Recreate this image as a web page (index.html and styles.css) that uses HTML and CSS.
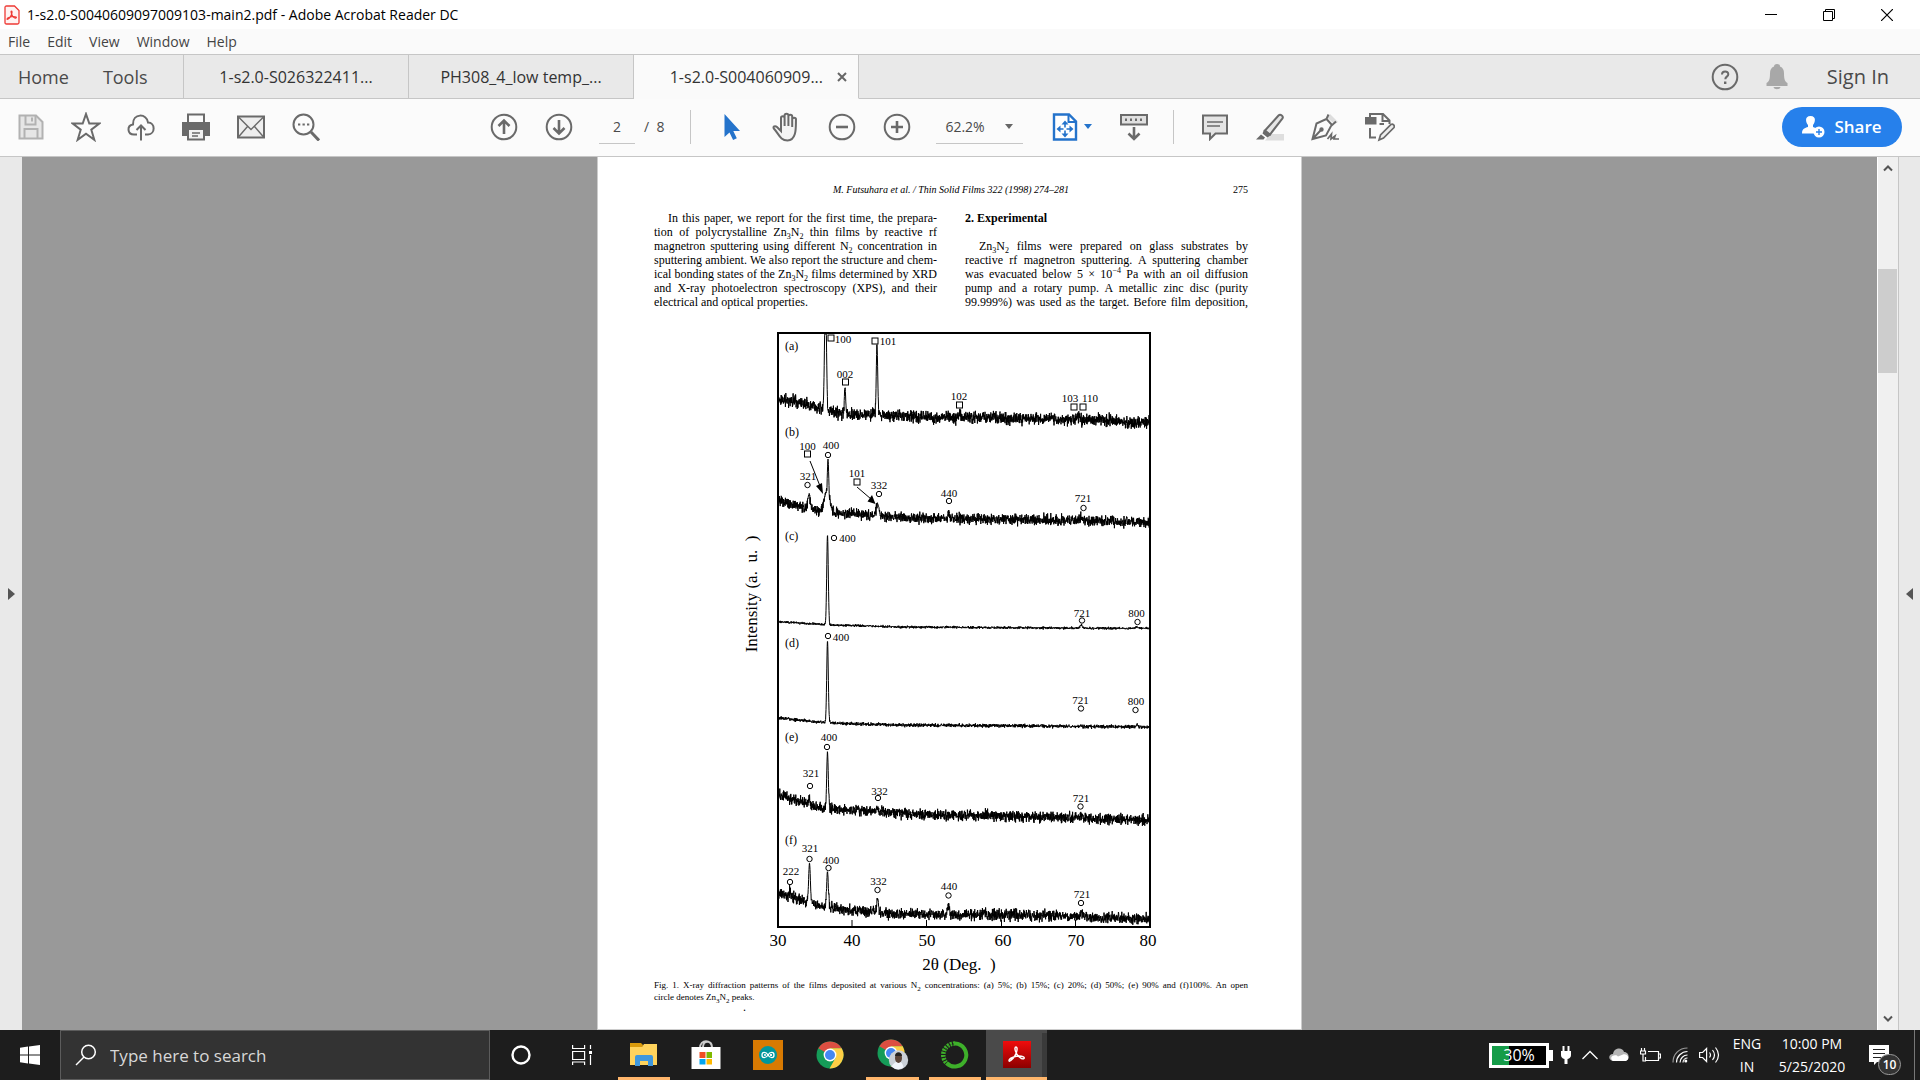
FILE: index.html
```html
<!DOCTYPE html>
<html lang="en">
<head>
<meta charset="utf-8">
<title>1-s2.0-S0040609097009103-main2.pdf - Adobe Acrobat Reader DC</title>
<link rel="stylesheet" href="styles.css">
</head>
<body>
<div class="app">
  <header class="titlebar">
    <svg class="file-icon" width="16" height="20" viewBox="0 0 16 20" fill="none" stroke="#ee3a35"><path d="M2.5 1h8L15 5.500V17.500Q15 19 13.500 19h-11Q1 19 1 17.500v-15Q1 1 2.500 1z" fill="#fff3f2" stroke-width="1.300"/><path d="M7.500 6c1 0 .5 3-1 5.500s-3.500 3.500-3.500 2.500 4-2.500 6.500-2.500 3.500 1 2.500 1.500-3-.5-4-3S6.800 6 7.500 6z" stroke-width="1.200"/></svg>
    <span class="title">1-s2.0-S0040609097009103-main2.pdf - Adobe Acrobat Reader DC</span>
    <div class="window-buttons">
      <button aria-label="Minimize"><svg width="12" height="12" viewBox="0 0 12 12"><path d="M0 5.500h12" stroke="#000"/></svg></button>
      <button aria-label="Restore"><svg width="12" height="12" viewBox="0 0 12 12" fill="none" stroke="#000"><path d="M.5 2.500h9v9h-9zM2.500 2V.5h9v9H10"/></svg></button>
      <button aria-label="Close"><svg width="12" height="12" viewBox="0 0 12 12"><path d="M0 0l12 12M12 0L0 12" stroke="#000" stroke-width="1.200"/></svg></button>
    </div>
  </header>
  <nav class="menubar" aria-label="Menu">
    <button>File</button><button>Edit</button><button>View</button><button>Window</button><button>Help</button>
  </nav>
  <nav class="tabs" aria-label="Documents">
    <div class="tabs-main"><button>Home</button><button>Tools</button></div>
    <button class="tab">1-s2.0-S026322411...</button>
    <button class="tab">PH308_4_low temp_...</button>
    <div class="tab tab-active"><button class="tab-name">1-s2.0-S004060909...</button><button class="tab-close" aria-label="Close tab"><svg width="10" height="10" viewBox="0 0 10 10"><path d="M1 1l8 8M9 1L1 9" stroke="#666" stroke-width="2"/></svg></button></div>
    <div class="account">
      <button aria-label="Help"><svg width="28" height="28" viewBox="0 0 28 28" fill="none" stroke="#6a6a6a"><circle cx="14" cy="14" r="12.300" stroke-width="2"/><path d="M11 11.500c0-4 6.300-4 6.300-.3 0 2.500-3 2.400-3 5" stroke-width="2"/><path d="M14.200 18.500v2.500" stroke-width="2.400"/></svg></button>
      <button aria-label="Notifications"><svg width="22" height="26" viewBox="0 0 22 26" fill="#a8a8a8"><path d="M11 0c2 0 3 1 3 2.500 3 1.200 4 3.500 4 7 0 6 1 8 3.500 9.500V22H.5v-3C3 17.500 4 15.500 4 9.500c0-3.500 1-5.800 4-7C8 1 9 0 11 0zM7.500 23h7c-.5 3-6.500 3-7 0z"/></svg></button>
      <button class="sign-in">Sign In</button>
    </div>
  </nav>
  <div class="toolbar">
    <div class="tools">
      <button aria-label="Save"><svg class="pale" viewBox="0 0 28 28"><path d="M2.500 2.500H19l6.500 6.500v16.500h-23z" fill="#e6e6e6"/><path d="M8.500 3v8.500h10V3M15 4.500v4M7.500 25v-9h13v9"/></svg></button>
      <button aria-label="Star"><svg class="wide" viewBox="0 0 30 30"><path d="M15 2l3.300 9.600h10l-8 6.100 3 10.100L15 21.700l-8.300 6.100 3-10.100-8-6.100h10z"/></svg></button>
      <button aria-label="Upload to cloud"><svg viewBox="0 0 28 28"><path d="M10 21.500H7C.2 21.500-.5 12.500 6 11.500 5.500 0 20 0 21 9.500c7.500.2 7.500 11.500 0 12h-3M14 27.500V13M9.500 17L14 12.500l4.500 4.500"/></svg></button>
      <button aria-label="Print"><svg viewBox="0 0 28 28"><path d="M6 9V1.500h16V9"/><path d="M1 10h26v12h-5v-6H6v6H1z" fill="#6a6a6a"/><path d="M6 16h16v10.500H6z" fill="#f2f2f2"/><path d="M10 20h8M10 23h6" stroke-width="1.500"/></svg></button>
      <button aria-label="Email"><svg viewBox="0 0 28 28"><path d="M1 3.500h26v21H1z" fill="#eee"/><path d="M1 3.500l13 13 13-13M1 24.500l9.500-11M27 24.500l-9.500-11" stroke-width="1.400"/></svg></button>
      <button aria-label="Find"><svg viewBox="0 0 28 28"><circle cx="11.500" cy="11.500" r="10"/><path d="M19 19l8 8.500" stroke-width="3"/><path d="M6 11.500h2.300M10.500 11.500h2.300M15 11.500h2.300" stroke-width="2"/></svg></button>
    </div>
    <div class="tools paging">
      <button aria-label="Previous page"><svg viewBox="0 0 28 28"><circle cx="14" cy="14" r="12.300"/><path d="M14 21V8M8.500 13L14 7.500l5.500 5.500" stroke-width="2.600"/></svg></button>
      <button aria-label="Next page"><svg viewBox="0 0 28 28"><circle cx="14" cy="14" r="12.300"/><path d="M14 7v13M8.500 15l5.500 5.500 5.500-5.500" stroke-width="2.600"/></svg></button>
      <input class="page-number" type="text" value="2" aria-label="Page">
      <span class="page-count">/&nbsp; 8</span>
    </div>
    <div class="tools ruled">
      <button aria-label="Select"><svg viewBox="0 0 28 28"><path d="M6.500 1v23l5-4.600 3.600 7.600 3.700-1.700-3.500-7.300H22z" fill="#2473cb" stroke="none"/></svg></button>
      <button aria-label="Hand"><svg class="wide" viewBox="0 0 30 30"><path d="M9 16V6c0-2.500 3.600-2.500 3.600 0v8V3.500c0-2.500 3.800-2.500 3.800 0V14 4.500c0-2.500 3.800-2.500 3.800 0V15 7.500c0-2.500 3.800-2.500 3.800 0-.4 5 1.500 21-8.500 21C8 28.500 7 22 1.800 16.500c-1.200-2 1.200-3.200 3.200-1.500l4 4z" fill="#f4f4f4"/></svg></button>
      <button aria-label="Zoom out"><svg viewBox="0 0 28 28"><circle cx="14" cy="14" r="12.300"/><path d="M8 14h12" stroke-width="2.600"/></svg></button>
      <button aria-label="Zoom in"><svg viewBox="0 0 28 28"><circle cx="14" cy="14" r="12.300"/><path d="M8 14h12M14 8v12" stroke-width="2.600"/></svg></button>
      <div class="zoom"><select aria-label="Zoom level"><option>62.2%</option></select><i class="caret"></i></div>
      <button class="fit" aria-label="Fit page"><svg viewBox="0 0 28 28"><path d="M3 1.500h15l7 7v18H3z" fill="#fff" stroke="#2473cb" stroke-width="2.400"/><path d="M17.500 1.500V9H25" stroke="#2473cb"/><path d="M14 9v14M7 16h14" stroke="#2473cb" stroke-width="1.600" stroke-dasharray="5.500 3"/><path d="M14 7.500l3.500 4h-7zM14 24.500l3.500-4h-7zM5.500 16l4-3.500v7zM22.500 16l-4-3.500v7z" fill="#2473cb" stroke="none"/></svg><i class="caret caret-blue"></i></button>
      <button aria-label="Scrolling"><svg viewBox="0 0 28 28"><path d="M1 2h26v9.500H1z" fill="#e0e0e0"/><path d="M5 6.800h2M10 6.800h2M15 6.800h2M20 6.800h2" stroke-width="2.400"/><path d="M14 14v12M8.500 20.500L14 26l5.500-5.500" stroke-width="2.600"/></svg></button>
    </div>
    <div class="tools ruled">
      <button aria-label="Comment"><svg viewBox="0 0 28 28"><path d="M2 2.500h24v18H14.500L9 26v-5.500H2z" fill="#e4e4e4"/><path d="M6 9h16M6 13h13" stroke-width="1.300"/></svg></button>
      <button aria-label="Highlight"><svg viewBox="0 0 28 28"><path d="M9 27.500L15 21h13v6.500z" fill="#dedede" stroke="none"/><path d="M9 17.500L22.500 2.500c2-2 5.500.8 3.800 3.200L14 21.500z" fill="#e6e6e6"/><path d="M8 16.500l7 5.500-3.500 2.500-5-4z" fill="#6a6a6a" stroke="none"/><path d="M5 21.500l4 3-1.500 2H0z" fill="#6a6a6a" stroke="none"/></svg></button>
      <button aria-label="Sign"><svg viewBox="0 0 28 28"><path d="M19 1l8 8-3.500 2L16 4.500z" fill="#ddd" stroke="none"/><path d="M17.500 1.500L15.500 6 5.500 10.500 1.500 26 15 22.500l5-9.500 5-4.500M15.500 6l5.500 6M2 25.500l7.500-8"/><circle cx="10.500" cy="16.500" r="1.200" fill="#6a6a6a"/><path d="M16.500 26l4-5-.5 5 4-3-1 3h5" stroke-width="1.700"/></svg></button>
      <button aria-label="Edit"><svg class="wide" viewBox="0 0 30 30"><path d="M0 5h11.500v7.500H0z" fill="#6a6a6a" stroke="none"/><path d="M5 5V2h13l6.500 6.500V12M17.500 2v7H24M5 16v9.500h6M14.500 12H19"/><path d="M14 28l1.500-5L26 12.500c2-1 4 1 3 3L18.500 26z" fill="#eee" stroke-width="1.700"/></svg></button>
    </div>
    <button class="share"><svg width="24" height="22" viewBox="0 0 24 22"><path d="M8.500 0c6.500 0 4.500 7 2.500 9v2c3 1 4 1.500 4.500 2.500-3 1-3.500 3-3.500 4H0c0-5 3-5.500 6-6.500V9C4 7 2 0 8.500 0z" fill="#fff"/><circle cx="17" cy="16" r="5.500" fill="#fff"/><path d="M17 13v6M14 16h6" stroke="#2680eb" stroke-width="1.400"/></svg>Share</button>
  </div>
  <main class="workspace">
    <button class="side" aria-label="Show navigation pane"><i class="arrow-right"></i></button>
    <div class="viewer">
      <article class="paper">
        <header class="running-head"><i>M. Futsuhara et al. / Thin Solid Films 322 (1998) 274–281</i><span>275</span></header>
        <div class="columns">
          <p><span class="line indent">In this paper, we report for the first time, the prepara-</span><span class="line">tion of polycrystalline Zn<sub>3</sub>N<sub>2</sub> thin films by reactive rf</span><span class="line">magnetron sputtering using different N<sub>2</sub> concentration in</span><span class="line">sputtering ambient. We also report the structure and chem-</span><span class="line">ical bonding states of the Zn<sub>3</sub>N<sub>2</sub> films determined by XRD</span><span class="line">and X-ray photoelectron spectroscopy (XPS), and their</span><span class="line line-last">electrical and optical properties.</span></p>
          <div><h2>2. Experimental</h2>
          <p><span class="line indent">Zn<sub>3</sub>N<sub>2</sub> films were prepared on glass substrates by</span><span class="line">reactive rf magnetron sputtering. A sputtering chamber</span><span class="line">was evacuated below 5 × 10<sup>−4</sup> Pa with an oil diffusion</span><span class="line">pump and a rotary pump. A metallic zinc disc (purity</span><span class="line">99.999%) was used as the target. Before film deposition,</span></p></div>
        </div>
        <figure>
          <svg class="chart" id="chart" viewBox="742 328 420 650" role="img" aria-label="X-ray diffraction patterns">
            <g id="traces"></g>
            <rect x="779" y="333" width="372" height="594" class="frame"/>
            <path d="M853 927v-7M927.500 927v-7M1002.500 927v-7M1076.500 927v-7" class="mark"/>
            <g id="markers"></g>
            <path d="M811 461L821 486M858 487L872 499" class="mark"/>
            <path d="M824 494l-7-8 6-3zM876.500 504l-8-2.500 4.500-6.500z"/>
            <g class="axis">
              <text x="779" y="946">30</text><text x="853" y="946">40</text><text x="928" y="946">50</text><text x="1004" y="946">60</text><text x="1077" y="946">70</text><text x="1149" y="946">80</text>
              <text x="960" y="970">2θ (Deg.&nbsp; )</text>
              <text transform="translate(758 594) rotate(-90)">Intensity (a.&nbsp; u.&nbsp; )</text>
            </g>
          </svg>
          <figcaption><span class="line">Fig. 1. X-ray diffraction patterns of the films deposited at various N<sub>2</sub> concentrations: (a) 5%; (b) 15%; (c) 20%; (d) 50%; (e) 90% and (f)100%. An open</span><span class="line line-last">circle denotes Zn<sub>3</sub>N<sub>2</sub> peaks.</span></figcaption>
        </figure>
        <p class="speck">.</p>
      </article>
    </div>
    <div class="scrollbar">
      <button aria-label="Scroll up"><svg width="10" height="8" viewBox="0 0 10 8"><path d="M1 6.500l4-4 4 4" fill="none" stroke="#555" stroke-width="2"/></svg></button>
      <div class="thumb"></div>
      <button class="scroll-down" aria-label="Scroll down"><svg width="10" height="8" viewBox="0 0 10 8"><path d="M1 1.500l4 4 4-4" fill="none" stroke="#555" stroke-width="2"/></svg></button>
    </div>
    <button class="side side-right" aria-label="Show tools pane"><i class="arrow-left"></i></button>
  </main>
</div>
<footer class="taskbar">
  <button class="start" aria-label="Start"><svg width="20" height="20" viewBox="0 0 20 20" fill="#fff"><path d="M0 2.700l8-1.100v7.900H0zM9 1.500L20 0v9.500H9zM0 10.500h8v7.900l-8-1.100zM9 10.500h11V20L9 18.500z"/></svg></button>
  <label class="search"><svg width="22" height="22" viewBox="0 0 22 22" fill="none" stroke="#fff" stroke-width="1.500"><circle cx="13.500" cy="8" r="6.800"/><path d="M9 13L1 21"/></svg><input type="text" placeholder="Type here to search" aria-label="Search"></label>
  <button class="cell" aria-label="Cortana"><svg width="22" height="22" viewBox="0 0 22 22"><circle cx="11" cy="11" r="8.500" fill="none" stroke="#fff" stroke-width="2.400"/></svg></button>
  <button class="cell" aria-label="Task view"><svg width="21" height="20" viewBox="0 0 21 20" fill="none" stroke="#fff" stroke-width="1.200"><path d="M.6 0v3.500h12V0M.6 6.500h12v8H.6zM.6 20v-3h12v3M18.500 0v4M18.500 10v10"/><path d="M17 6h3v3h-3z" fill="#fff" stroke="none"/></svg></button>
  <button class="cell running" aria-label="File Explorer"><svg width="28" height="24" viewBox="0 0 28 24"><path d="M0 0h11l2 2-1 4H0z" fill="#d99a0b"/><path d="M0 4h12l2-3h13v21H0z" fill="#ffd35c"/><path d="M5 23V14q0-2 2-2h14q2 0 2 2v9h-5v-5h-8v5z" fill="#3f97dc"/></svg></button>
  <button class="cell" aria-label="Store"><svg width="30" height="30" viewBox="0 0 30 30"><path d="M9 8c0-9 12-9 12 0M12 7c0-7 9-7 9 0" fill="none" stroke="#ccc" stroke-width="2"/><path d="M.5 7h29v22h-29z" fill="#fff"/><path d="M8.500 12h6v6h-6z" fill="#f04e23"/><path d="M15.500 12h5.500v6h-5.500z" fill="#7fb900"/><path d="M8.500 19h6v5.500h-6z" fill="#01a4ef"/><path d="M15.500 19h5.500v5.500h-5.500z" fill="#ffb900"/></svg></button>
  <button class="cell" aria-label="Arduino"><svg width="30" height="30" viewBox="0 0 30 30"><path d="M0 0h30v30H0z" fill="#d87a02"/><circle cx="15" cy="15" r="9" fill="#00979c"/><g fill="none" stroke="#fff" stroke-width="1.300"><path d="M15 15c-2-3.500-6-3.500-6 0s4 3.500 6 0c2-3.500 6-3.500 6 0s-4 3.500-6 0zM11 15h2M17 15h2M18 14v2"/></g></svg></button>
  <button class="cell" aria-label="Chrome"><svg width="28" height="28" viewBox="0 0 28 28"><g id="chrome"><circle cx="14" cy="14" r="13.500" fill="#159c58"/><path d="M14 14L2.300 7.300A13.500 13.500 0 0 1 25.700 7.300H14z" fill="#dc4e41"/><path d="M14 7.300h11.700A13.500 13.500 0 0 1 13.500 27.500L19.500 17z" fill="#fece45"/><circle cx="14" cy="14" r="6.400" fill="#fff"/><circle cx="14" cy="14" r="5" fill="#4587f3"/></g></svg></button>
  <button class="cell running running-pair" aria-label="Chrome, profile"><svg width="32" height="32" viewBox="0 0 32 32"><use href="#chrome"/><circle cx="21.500" cy="21" r="9.700" fill="#cbd0d7"/><path d="M14.500 27.500q3-5 7-5t5 6q-6 4-12-1z" fill="#f1f4fa"/><ellipse cx="21.500" cy="19" rx="3.500" ry="5" fill="#5b4438"/><path d="M18 17c0-5 7-5 7 0z" fill="#25211f"/></svg></button>
  <button class="cell running" aria-label="Anaconda"><svg width="28" height="28" viewBox="0 0 28 28" fill="none" stroke="#3eb02a"><path d="M14 2.500a11.500 11.500 0 1 1-8.500 19.500" stroke-width="4"/><path d="M14 2.500A11.500 11.500 0 0 0 5.500 22" stroke-width="4.500" stroke-dasharray="2 1"/><path d="M13 3A11 11 0 0 0 5 20" stroke="#1d1d1d" stroke-dasharray="1 2"/></svg></button>
  <button class="cell running current" aria-label="Acrobat Reader"><svg width="28" height="28" viewBox="0 0 28 28"><defs><linearGradient id="red" x2="0" y2="1"><stop stop-color="#f00c0c"/><stop offset="1" stop-color="#8c0000"/></linearGradient></defs><path d="M0 0h28v27H0z" fill="url(#red)"/><path d="M13 6c2 0 1 6-1.500 9.500S6 21.500 6 19.500s6-4.500 10-4.500 6 1.500 5 2.500-5-.5-7.500-5S12 6 13 6z" fill="none" stroke="#fff" stroke-width="1.400"/></svg></button>
  <div class="tray">
    <div class="battery"><span>30%</span></div>
    <svg width="10" height="18" viewBox="0 0 10 18" fill="#fff"><path d="M1.500 0h2v5h3V0h2v5H10v4q0 3-3.500 4v5h-3v-5Q0 12 0 9V5h1.500z"/></svg>
    <svg width="16" height="10" viewBox="0 0 16 10"><path d="M.5 9L8 1.500 15.500 9" fill="none" stroke="#fff" stroke-width="1.300"/></svg>
    <svg width="20" height="14" viewBox="0 0 20 14"><path d="M4 13C-1 12-1 6 4 6 5-1 14-1 15 4c6 0 6 9 1 9z" fill="#b5b5b5"/><path d="M4 13c-2-1-3-5 1-5.500 2-.5 3 0 4 1l5-2c2-.5 4 0 5 2 1 2-.5 4.500-3 4.500z" fill="#fff"/></svg>
    <svg width="21" height="14" viewBox="0 0 21 14" fill="none" stroke="#fff"><path d="M8 3.500h10.500v9h-13V9M19 6h1.500v4H19M1.500 0v3M4.500 0v3M.5 3h5v3h-5zM3 6v7h3" stroke-width="1.200"/></svg>
    <svg width="16" height="16" viewBox="0 0 16 16" fill="none" stroke="#fff" stroke-width="1.200"><path d="M1 15.500C1 7 7 1 15.500 1" stroke="#999"/><path d="M4.500 15.500c0-6 5-11 11-11"/><path d="M8 15.500C8 11.500 11.500 8 15.500 8M11 15.500c0-2.500 2-4.500 4.500-4.500"/><circle cx="13.800" cy="14" r="1.500" fill="#fff" stroke="none"/></svg>
    <svg width="21" height="18" viewBox="0 0 21 18" fill="none" stroke="#fff" stroke-width="1.200"><path d="M.6 6.500h3l4-4v13l-4-4h-3zM10.500 6.500q2 2.500 0 5M13.500 4q4 5 0 10M16.500 1.500q6 7.500 0 15"/></svg>
    <div class="stack language"><span>ENG</span><span>IN</span></div>
    <div class="stack clock"><span>10:00 PM</span><span>5/25/2020</span></div>
    <button class="notices" aria-label="Notifications"><svg width="20" height="20" viewBox="0 0 20 20"><path d="M0 0h20v17H8l-3 3v-3H0z" fill="#fff"/><path d="M4 4.500h12M4 8.500h12M4 12.500h8" stroke="#222"/></svg><span class="badge">10</span></button>
  </div>
</footer>
<script src="chart.js"></script>
</body>
</html>
```
FILE: styles.css
```css
* { box-sizing: border-box; }
body {
  margin: 0;
  height: 100vh;
  display: flex;
  flex-direction: column;
  overflow: hidden;
  font-family: "Open Sans", "Noto Sans", sans-serif;
  background: #999;
}
button, input, select { font: inherit; color: inherit; border: 0; padding: 0; background: none; }
button { display: flex; align-items: center; justify-content: center; }
svg { display: block; flex: none; }

.app { flex: 1; min-height: 0; display: flex; flex-direction: column; }

.titlebar { display: flex; align-items: center; height: 29px; padding-left: 4px; background: #fff; font-size: 14px; color: #000; }
.title { margin-left: 7px; }
.window-buttons { display: flex; margin-left: auto; padding-right: 4px; }
.window-buttons button { width: 58px; height: 29px; }

.menubar { display: flex; gap: 17px; height: 26px; padding: 0 8px; background: #fafafa; border-bottom: 1px solid #c6c6c6; font-size: 14px; color: #444; }

.tabs { display: flex; height: 44px; background: #e9e9e9; color: #333; font-size: 16px; }
.tabs-main { display: flex; align-items: center; gap: 34px; width: 184px; padding-left: 18px; border-right: 1px solid #c6c6c6; border-bottom: 1px solid #c6c6c6; font-size: 18px; color: #4a4a4a; }
.tab { display: flex; align-items: center; justify-content: center; width: 225px; border-right: 1px solid #c6c6c6; border-bottom: 1px solid #c6c6c6; }
.tab-active { background: #fafafa; border-bottom-color: #fafafa; justify-content: flex-end; padding-right: 11px; gap: 14px; }
.account { flex: 1; display: flex; align-items: center; justify-content: flex-end; gap: 27px; padding-right: 31px; border-bottom: 1px solid #c6c6c6; }
.sign-in { margin-left: 12px; font-size: 20px; font-weight: 500; color: #4a4a4a; }

.toolbar { display: flex; align-items: center; height: 58px; padding: 0 18px 2px 3px; background: #fbfbfb; border-bottom: 1px solid #c6c6c6; font-size: 14px; color: #4a4a4a; }
.tools { display: flex; align-items: center; }
.tools button { width: 55px; height: 34px; }
.tools svg { width: 28px; height: 28px; fill: none; stroke: #6a6a6a; stroke-width: 2; }
.tools svg.wide { width: 30px; height: 30px; }
.tools svg.pale { stroke: #b2b2b2; }
.paging { margin-left: 143px; }
.page-number { width: 36px; height: 34px; margin-left: 13px; text-align: center; border-bottom: 1px solid #c6c6c6; }
.page-count { margin-left: 9px; }
.ruled { height: 34px; border-left: 1px solid #c6c6c6; padding-left: 13px; }
.paging + .ruled { margin-left: 26px; }
.ruled + .ruled { margin-left: 12px; }
.zoom { display: flex; align-items: center; width: 87px; height: 34px; margin: 0 13px 0 12px; padding-left: 9px; border-bottom: 1px solid #c6c6c6; }
.zoom select { appearance: none; width: 60px; }
.caret { border: 4px solid transparent; border-top: 5px solid #666; border-bottom: 0; }
.caret-blue { border-top-color: #2473cb; }
.tools .fit { gap: 5px; width: 70px; }
.share { width: 120px; height: 40px; margin-left: auto; gap: 8px; border-radius: 20px; background: #2680eb; color: #fff; font-size: 17px; font-weight: 600; }

.workspace { flex: 1; min-height: 0; display: flex; }
.side { width: 22px; background: #e9e9e9; }
.side-right { border-left: 1px solid #c6c6c6; }
.arrow-right { border: 6px solid transparent; border-left: 7px solid #555; border-right: 0; }
.arrow-left { border: 6px solid transparent; border-right: 7px solid #555; border-left: 0; }
.viewer { flex: 1; min-width: 0; display: flex; justify-content: center; overflow: hidden; background: #999; }
.scrollbar { display: flex; flex-direction: column; width: 21px; background: #f0f0f0; border-left: 1px solid #fff; }
.scrollbar button { height: 22px; }
.thumb { height: 104px; margin: 90px 1px 0 0; background: #cdcdcd; }
.scroll-down { margin-top: auto; }

.paper { width: 705px; padding: 26px 53px 0 56px; background: #fff; border: solid #ccc; border-width: 0 1px 1px; font: 12px/14px "Liberation Serif", serif; color: #000; }
.paper p, .paper h2, .paper figure { margin: 0; }
.running-head { display: grid; grid-template-columns: 1fr auto 1fr; font-size: 10px; }
.running-head i { grid-column: 2; }
.running-head span { text-align: right; }
.columns { display: grid; grid-template-columns: 283px 283px; justify-content: space-between; margin-top: 14px; }
.columns h2 { font-size: 12px; font-weight: bold; margin-bottom: 14px; }
.line { display: block; white-space: nowrap; text-align: justify; text-align-last: justify; }
.line-last { text-align-last: left; }
.indent { padding-left: 14px; }
sub, sup { font-size: 8px; line-height: 0; }
sub { vertical-align: -3px; }
.paper figure { margin-top: 19px; }
.chart { width: 420px; height: 650px; margin: 0 auto; }
figcaption { font-size: 9px; line-height: 12px; margin-top: 1px; }
figcaption sub { font-size: 7px; }
.speck { padding-left: 89px; line-height: 8px; }

.frame { fill: none; stroke: #000; stroke-width: 2; }
.trace { fill: none; stroke: #000; stroke-width: 1; }
.mark { fill: none; stroke: #000; stroke-width: 1; }
.peak { font-size: 11px; text-anchor: middle; }
.series { font-size: 12px; }
.axis { font-size: 17px; text-anchor: middle; }

.taskbar { display: flex; height: 50px; background: #1d1d1d; color: #fff; }
.start { width: 60px; }
.search { display: flex; align-items: center; gap: 13px; width: 430px; padding-left: 14px; background: #333; border: 1px solid #5c5c5c; }
.search input { flex: 1; font-size: 17px; }
.search input::placeholder { color: #d8d8d8; opacity: 1; }
.cell { width: 62px; border: solid transparent; border-width: 3px 5px; }
.search + .cell { width: 61px; }
.running { width: 52px; margin: 0 5px; border-width: 3px 0; border-bottom-color: #ffb66b; }
.running-pair { width: 53px; }
.current { width: 61px; margin: 0; border-top-color: #4a4a4a; background: linear-gradient(90deg, #4a4a4a 56px, #3a3a3a 56px); }
.tray { display: flex; align-items: center; margin-left: auto; padding-right: 5px; }
.tray > svg { margin-right: 11px; }
.tray > svg:nth-of-type(6) { margin-right: 5px; }
.battery { position: relative; width: 60px; height: 25px; margin-right: 12px; border: 3px solid #fff; background: linear-gradient(90deg, #159c48 17px, #000 17px); text-align: center; font-size: 16px; line-height: 19px; }
.battery::after { content: ""; position: absolute; right: -7px; top: 4px; width: 4px; height: 11px; background: #fff; }
.stack { display: flex; flex-direction: column; text-align: center; font-size: 14px; line-height: 23px; }
.language { width: 44px; }
.clock { width: 86px; }
.notices { position: relative; width: 60px; height: 50px; padding-right: 12px; border-right: 1px solid #777; }
.badge { position: absolute; left: 23px; top: 24px; width: 23px; height: 21px; border: 1px solid #999; border-radius: 11px; background: #333; font-size: 12px; font-weight: 600; line-height: 19px; text-align: center; }
```
FILE: chart.js
```js
// Diffraction traces: baseline points, noise amplitude, and peaks as [x, top, width].
const traces = [
  { noise: 9, base: [[780,399],[800,402],[817,407],[840,414],[900,415],[920,417],[1000,418],[1100,420],[1151,423]],
    peaks: [[826.5,290,1.3],[846,386,.9],[878,344,1],[960.5,411,.8],[1079,415,2]] },
  { noise: 8, base: [[780,501],[800,506],[820,511],[840,513],[880,516],[940,519],[1000,519],[1100,521],[1151,523]],
    peaks: [[810,494,1.5],[828,490,3.5],[829,460,1.2],[878.5,503,1.8],[950,512,1.2],[1082,518,1.5]] },
  { noise: 1.800, base: [[780,622],[820,624],[832,625],[900,627],[1151,628.5]],
    peaks: [[828.5,535,1.1],[1082,625,1.5],[1138,627,1.5]] },
  { noise: 2.600, base: [[780,718],[820,722],[840,723.5],[900,725],[1151,727]],
    peaks: [[828.5,641,1.1],[1082,725,1],[1138,725,1]] },
  { noise: 8, base: [[780,795],[800,801],[815,807],[840,809],[880,812],[920,814.5],[1000,816],[1151,820]],
    peaks: [[810,797,1.3],[828.5,752,1.1],[878,807,1],[1082,815,1.2]] },
  { noise: 8, base: [[780,893],[792,897],[805,901],[815,905],[835,908],[870,912],[900,914],[1000,915],[1050,916],[1151,919.5]],
    peaks: [[790.5,892,1],[810.5,863,1.2],[828.5,872,1.2],[878.5,899,1.3],[949.5,904,1.3],[1082,913,1.5]] }
];
// Markers: shape, centre x, centre y, label, label x, label baseline.
const markers = [
  ['s',832,338,'100',844,343],['s',876,341,'101',889,345],['s',846.5,382,'002',846,378],['s',960.5,405,'102',960,400],
  ['s',1075,407,'103',1071,402],['s',1084,407,'110',1091,402],
  ['s',808.5,454,'100',808.5,450],['c',829,455,'400',832,449],['c',808.5,485,'321',809,480],['s',858,482,'101',858,477],
  ['c',880,494,'332',880,489],['c',950,501,'440',950,497],['c',1084.5,508,'721',1084,502],
  ['c',835,538,'400',848.5,542],['c',1083,620.5,'721',1083,617],['c',1138.5,622,'800',1137.5,617],
  ['c',829,636,'400',842,641],['c',1082,708.5,'721',1081.5,703.5],['c',1136.5,710,'800',1137,705],
  ['c',828,747,'400',830,741],['c',811,786,'321',812,777],['c',879,798,'332',880.5,795],['c',1081.5,806.5,'721',1082,802],
  ['c',810.5,859,'321',811,852],['c',829.5,868,'400',832,864],['c',791,882,'222',792,875],
  ['c',878.5,890,'332',879.5,885],['c',949.5,895.5,'440',950,890],['c',1082,903,'721',1083,898]
];
const series = [['(a)',349.5],['(b)',436],['(c)',539.5],['(d)',646.5],['(e)',741],['(f)',844]];

let seed = 7;
const random = () => (seed = (seed * 16807) % 2147483647) / 2147483647;
const level = (points, x) => {
  let i = 1;
  while (i < points.length - 1 && points[i][0] < x) i++;
  const [x0, y0] = points[i - 1], [x1, y1] = points[i];
  return y0 + (y1 - y0) * (x - x0) / (x1 - x0);
};
let lines = '';
for (const t of traces) {
  const out = [];
  for (let x = 780; x <= 1150.5; x += 0.2) {
    const base = level(t.base, x);
    let y = base;
    for (const [px, top, w] of t.peaks) y = Math.min(y, base - (level(t.base, px) - top) * Math.exp(-(((x - px) / w) ** 2)));
    const swing = (random() + random() + random() - 1.5) / 1.5;
    const damp = base - y > 12 ? 0.3 : 1;
    out.push(x.toFixed(1) + ',' + Math.max(334, y + swing * t.noise * damp).toFixed(1));
  }
  lines += `<polyline class="trace" points="${out.join(' ')}"/>`;
}
document.getElementById('traces').innerHTML = lines;
document.getElementById('markers').innerHTML =
  markers.map(([k, x, y, label, lx, ly]) =>
    (k === 's' ? `<rect class="mark" x="${x - 3}" y="${y - 3}" width="6" height="6"/>` : `<circle class="mark" cx="${x}" cy="${y}" r="2.700"/>`) +
    `<text class="peak" x="${lx}" y="${ly}">${label}</text>`).join('') +
  series.map(([label, y]) => `<text class="series" x="786" y="${y}">${label}</text>`).join('');
```
